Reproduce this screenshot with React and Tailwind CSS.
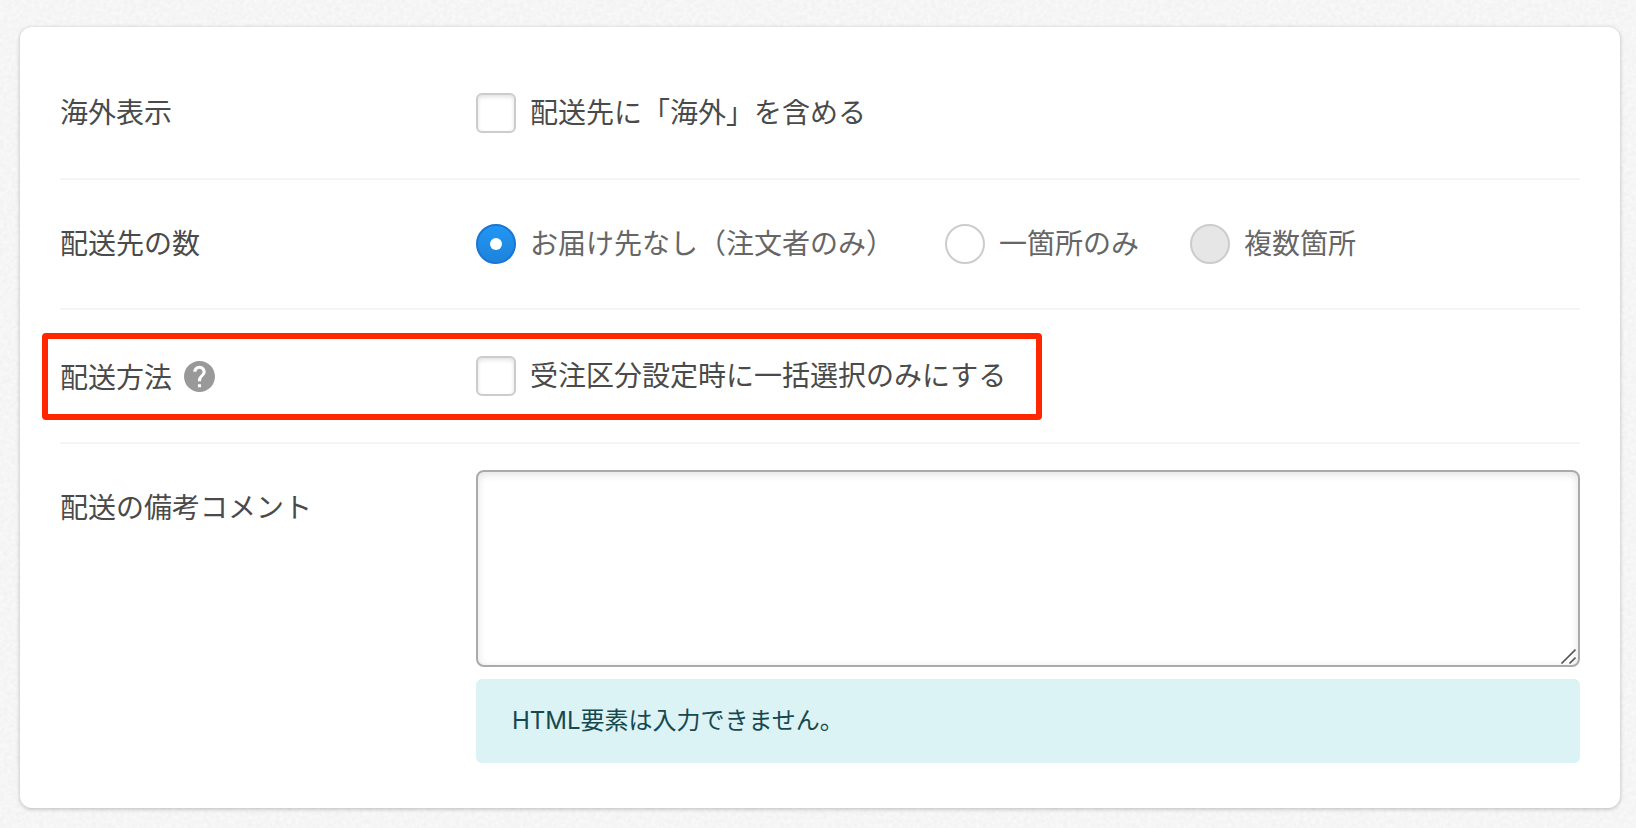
import React, { useState } from "react";

const destinations = [
  { value: "none", label: "お届け先なし（注文者のみ）" },
  { value: "single", label: "一箇所のみ" },
  { value: "multiple", label: "複数箇所", disabled: true },
];

// Grainy paper texture behind the card
function PaperTexture() {
  return (
    <svg aria-hidden="true" className="absolute inset-0 w-full h-full">
      <filter id="paper" x="0" y="0" width="100%" height="100%" colorInterpolationFilters="sRGB">
        <feTurbulence type="fractalNoise" baseFrequency="0.25" numOctaves="2" stitchTiles="stitch" />
        <feColorMatrix
          type="matrix"
          values="0.05 0 0 0 0.937  0.05 0 0 0 0.937  0.05 0 0 0 0.937  0 0 0 0 1"
        />
      </filter>
      <rect width="100%" height="100%" filter="url(#paper)" />
    </svg>
  );
}

function Checkbox({ label }) {
  return (
    <label className="flex items-center gap-[14px]">
      <input
        type="checkbox"
        className="appearance-none shrink-0 size-10 rounded-md border-2 border-[#cccccc] bg-white shadow-[inset_0_2px_4px_rgba(0,0,0,0.12)] checked:bg-[#1e88e5]"
      />
      <span>{label}</span>
    </label>
  );
}

function Radio({ option, checked, onChange }) {
  return (
    <label className="flex items-center gap-[14px] text-[#666666]">
      <span className="grid shrink-0 place-items-center">
        <input
          type="radio"
          name="destination"
          value={option.value}
          checked={checked}
          disabled={option.disabled}
          onChange={onChange}
          className="appearance-none col-start-1 row-start-1 size-10 rounded-full border-2 border-[#cccccc] bg-white checked:border-[#1976d2] checked:bg-linear-to-b checked:from-[#2196f3] checked:to-[#1e83dc] disabled:bg-[#e6e6e6]"
        />
        {checked && (
          <span className="col-start-1 row-start-1 size-3 rounded-full bg-white pointer-events-none" />
        )}
      </span>
      <span>{option.label}</span>
    </label>
  );
}

function HelpIcon() {
  return (
    <svg viewBox="2 2 20 20" className="size-[31px]" fill="#999999" aria-hidden="true">
      <path d="M12 2C6.48 2 2 6.48 2 12s4.48 10 10 10 10-4.48 10-10S17.52 2 12 2zm1 17h-2v-2h2v2zm2.07-7.75-.9.92C13.45 12.9 13 13.5 13 15h-2v-.5c0-1.1.45-2.1 1.17-2.83l1.24-1.26c.37-.36.59-.86.59-1.41 0-1.1-.9-2-2-2s-2 .9-2 2H8c0-2.21 1.79-4 4-4s4 1.79 4 4c0 .88-.36 1.68-.93 2.25z" />
    </svg>
  );
}

function ResizeGrip() {
  return (
    <svg
      viewBox="0 0 16 16"
      className="absolute right-1 bottom-[3px] size-4 pointer-events-none"
      stroke="#555555"
      strokeWidth="1.6"
      aria-hidden="true"
    >
      <path d="M1.5 15.5l14-14M9.5 15.5l6-6" />
    </svg>
  );
}

function App() {
  const [destination, setDestination] = useState("none");

  return (
    <div className="relative min-h-screen bg-[#f5f5f5] px-5 pt-[27px] pb-5 font-[Inter,'Noto_Sans_CJK_JP',sans-serif] text-[28px] leading-10 text-[#4a4a4a] md:pr-4">
      <PaperTexture />
      <form className="relative rounded-xl bg-white px-10 pt-[22px] pb-[45px] shadow-[0_1px_4px_rgba(0,0,0,0.25)]">
        <div className="flex items-center border-b-2 border-[#f5f5f5] pt-11 pb-[45px]">
          <div className="w-[416px] shrink-0">海外表示</div>
          <Checkbox label="配送先に「海外」を含める" />
        </div>

        <div className="flex items-center border-b-2 border-[#f5f5f5] py-11">
          <div className="w-[416px] shrink-0">配送先の数</div>
          <div className="flex flex-wrap gap-x-[51px]">
            {destinations.map((option) => (
              <Radio
                key={option.value}
                option={option}
                checked={destination === option.value}
                onChange={() => setDestination(option.value)}
              />
            ))}
          </div>
        </div>

        <div className="border-b-2 border-[#f5f5f5] py-11">
          <div className="relative flex w-fit items-center">
            <div className="flex w-[416px] shrink-0 items-end gap-3">
              配送方法
              <button type="button" aria-label="ヘルプ" className="flex h-11 items-center">
                <HelpIcon />
              </button>
            </div>
            <Checkbox label="受注区分設定時に一括選択のみにする" />
            {/* highlight frame */}
            <div className="absolute -top-[21px] -bottom-[22px] -left-[18px] -right-9 rounded-sm border-6 border-[#ff2600] pointer-events-none" />
          </div>
        </div>

        <div className="flex items-start pt-[26px]">
          <label htmlFor="comment" className="w-[416px] shrink-0 pt-[18px]">
            配送の備考コメント
          </label>
          <div className="flex min-w-0 grow flex-col gap-3">
            <div className="relative">
              <textarea
                id="comment"
                className="block h-[197px] w-full rounded-lg border-2 border-[#aaaaaa] bg-white p-3 shadow-[inset_0_2px_8px_rgba(0,0,0,0.12)] [&::-webkit-resizer]:hidden"
              />
              <ResizeGrip />
            </div>
            <p className="rounded-md bg-[#dbf3f5] px-9 py-[22px] text-2xl leading-10 text-[#164850]">
              HTML要素は入力できません。
            </p>
          </div>
        </div>
      </form>
    </div>
  );
}

export default App;
